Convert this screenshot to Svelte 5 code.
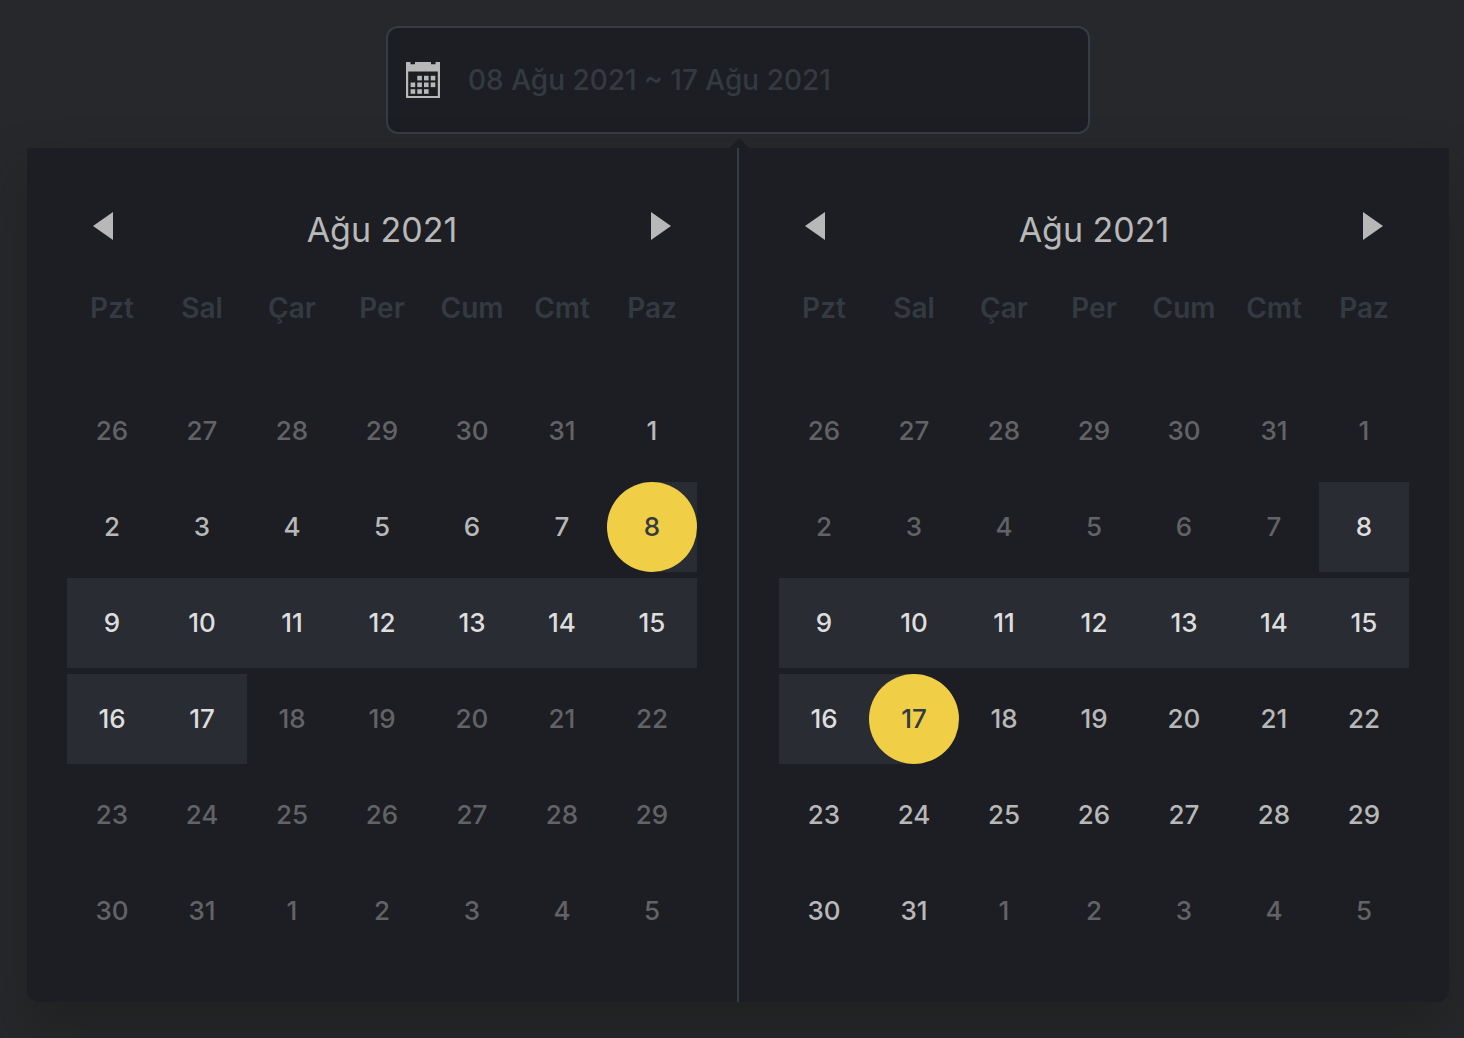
<script>
  const weekdays = ['Pzt', 'Sal', 'Çar', 'Per', 'Cum', 'Cmt', 'Paz'];
  const rangeStart = 8;
  const rangeEnd = 17;
  let range = $state('08 Ağu 2021 ~ 17 Ağu 2021');

  // The grid opens on Monday 26 July and spans six weeks.
  function buildWeeks(isEnabled, selected, capSide) {
    return Array.from({ length: 6 }, (_, week) =>
      Array.from({ length: 7 }, (_, weekday) => {
        const offset = week * 7 + weekday - 5;
        const inMonth = offset >= 1 && offset <= 31;
        const day = offset < 1 ? offset + 31 : offset > 31 ? offset - 31 : offset;
        return {
          day,
          inRange: inMonth && offset >= rangeStart && offset <= rangeEnd,
          selected: inMonth && offset === selected,
          enabled: inMonth && isEnabled(offset),
          capSide
        };
      })
    );
  }

  const calendars = [
    { id: 'start', title: 'Ağu 2021', weeks: buildWeeks((d) => d <= rangeEnd, rangeStart, 'start') },
    { id: 'end', title: 'Ağu 2021', weeks: buildWeeks((d) => d >= rangeStart, rangeEnd, 'end') }
  ];

  const iconCells = [
    [1, 2, 3],
    [0, 1, 2, 3],
    [0, 1, 2]
  ].flatMap((columns, row) => columns.map((column) => ({ x: 4.6 + column * 6.7, y: 13.8 + row * 6.7 })));
</script>

<main class="page">
  <label class="field">
    <svg class="field-icon" viewBox="0 0 34 36" aria-hidden="true">
      <path
        fill-rule="evenodd"
        d="M0 0h4.500v2.300h4.500V0h16v2.300h4.500V0H34v36H0zM2.200 9.500v24.500h29.600V9.500z"
      />
      {#each iconCells as cell}
        <rect x={cell.x} y={cell.y} width="4.600" height="4.600" />
      {/each}
    </svg>
    <input type="text" aria-label="Tarih aralığı" bind:value={range} />
  </label>

  <section class="panel">
    {#each calendars as calendar (calendar.id)}
      <div class="calendar">
        <header>
          <button class="nav" type="button" aria-label="Önceki ay">
            <svg viewBox="0 0 20 28" aria-hidden="true"><path d="M20 0v28L0 14z" /></svg>
          </button>
          <h2>{calendar.title}</h2>
          <button class="nav" type="button" aria-label="Sonraki ay">
            <svg viewBox="0 0 20 28" aria-hidden="true"><path d="M0 0v28l20-14z" /></svg>
          </button>
        </header>
        <table>
          <thead>
            <tr>
              {#each weekdays as name}
                <th scope="col">{name}</th>
              {/each}
            </tr>
          </thead>
          <tbody>
            {#each calendar.weeks as week}
              <tr>
                {#each week as cell}
                  <td
                    class:range={cell.inRange && !cell.selected}
                    class:cap-start={cell.selected && cell.capSide === 'start'}
                    class:cap-end={cell.selected && cell.capSide === 'end'}
                  >
                    <button
                      class="day"
                      class:in-range={cell.inRange}
                      class:selected={cell.selected}
                      type="button"
                      disabled={!cell.enabled}>{cell.day}</button
                    >
                  </td>
                {/each}
              </tr>
            {/each}
          </tbody>
        </table>
      </div>
    {/each}
  </section>
</main>

<style>
  :global(body) {
    margin: 0;
    background: #27282b;
  }

  .page {
    display: flex;
    flex-direction: column;
    align-items: center;
    gap: 14px;
    box-sizing: border-box;
    min-height: 100vh;
    padding: 26px 15px 36px 27px;
    font-family: Inter, 'Liberation Sans', sans-serif;
    color: #b8b8b8;
  }

  .field {
    display: flex;
    align-items: center;
    gap: 28px;
    box-sizing: border-box;
    width: 100%;
    max-width: 704px;
    height: 108px;
    padding: 0 18px;
    border: 2px solid #363c44;
    border-radius: 12px;
    background: #1d1e23;
  }

  .field-icon {
    flex: none;
    width: 34px;
    height: 36px;
    fill: #b8b8b8;
  }

  input {
    flex: 1;
    min-width: 0;
    padding: 0;
    border: 0;
    outline: 0;
    background: transparent;
    color: #333a41;
    font: 500 28px/36px Inter, 'Liberation Sans', sans-serif;
  }

  .panel {
    position: relative;
    display: grid;
    grid-template-columns: 1fr 1fr;
    width: 100%;
    border-radius: 0 0 12px 12px;
    background: #1d1e23;
    box-shadow: 0 30px 50px rgba(28, 28, 26, 0.5);
  }

  .panel::before {
    content: '';
    position: absolute;
    bottom: 100%;
    left: 50%;
    margin-left: -9px;
    border: solid transparent;
    border-width: 0 10px 10px;
    border-bottom-color: #1d1e23;
  }

  .calendar {
    min-width: 0;
    padding: 62px 40px 40px;
  }

  .calendar:first-child {
    border-right: 2px solid #363c44;
    margin-right: -1px;
  }

  .calendar:last-child {
    margin-left: 1px;
  }

  header {
    display: flex;
    align-items: flex-start;
    justify-content: space-between;
    padding: 0 26px;
  }

  h2 {
    margin: 0;
    font-size: 34px;
    font-weight: 400;
    line-height: 40px;
  }

  button {
    padding: 0;
    border: 0;
    background: transparent;
    color: inherit;
    font: inherit;
    cursor: pointer;
  }

  .nav {
    display: flex;
    margin-top: 2px;
  }

  .nav svg {
    width: 20px;
    height: 28px;
    fill: currentColor;
  }

  table {
    width: 100%;
    margin-top: 35px;
    border-spacing: 0 6px;
    table-layout: fixed;
  }

  th {
    height: 89px;
    padding: 0;
    vertical-align: top;
    color: #333a41;
    font-size: 28px;
    font-weight: 600;
    line-height: 34px;
  }

  td {
    height: 90px;
    padding: 0;
    text-align: center;
  }

  .range {
    background: #2a2c33;
  }

  .cap-start {
    background: linear-gradient(to right, transparent 50%, #2a2c33 50%);
  }

  .cap-end {
    background: linear-gradient(to right, #2a2c33 50%, transparent 50%);
  }

  .day {
    display: block;
    width: 100%;
    max-width: 90px;
    height: 90px;
    margin: 0 auto;
    padding-bottom: 2px;
    border-radius: 50%;
    font-size: 26px;
    font-weight: 500;
  }

  .day:disabled {
    color: #626366;
    cursor: default;
  }

  .day.in-range {
    color: #dedede;
  }

  .day.selected {
    background: #f0ce46;
    color: #333a41;
  }
</style>
